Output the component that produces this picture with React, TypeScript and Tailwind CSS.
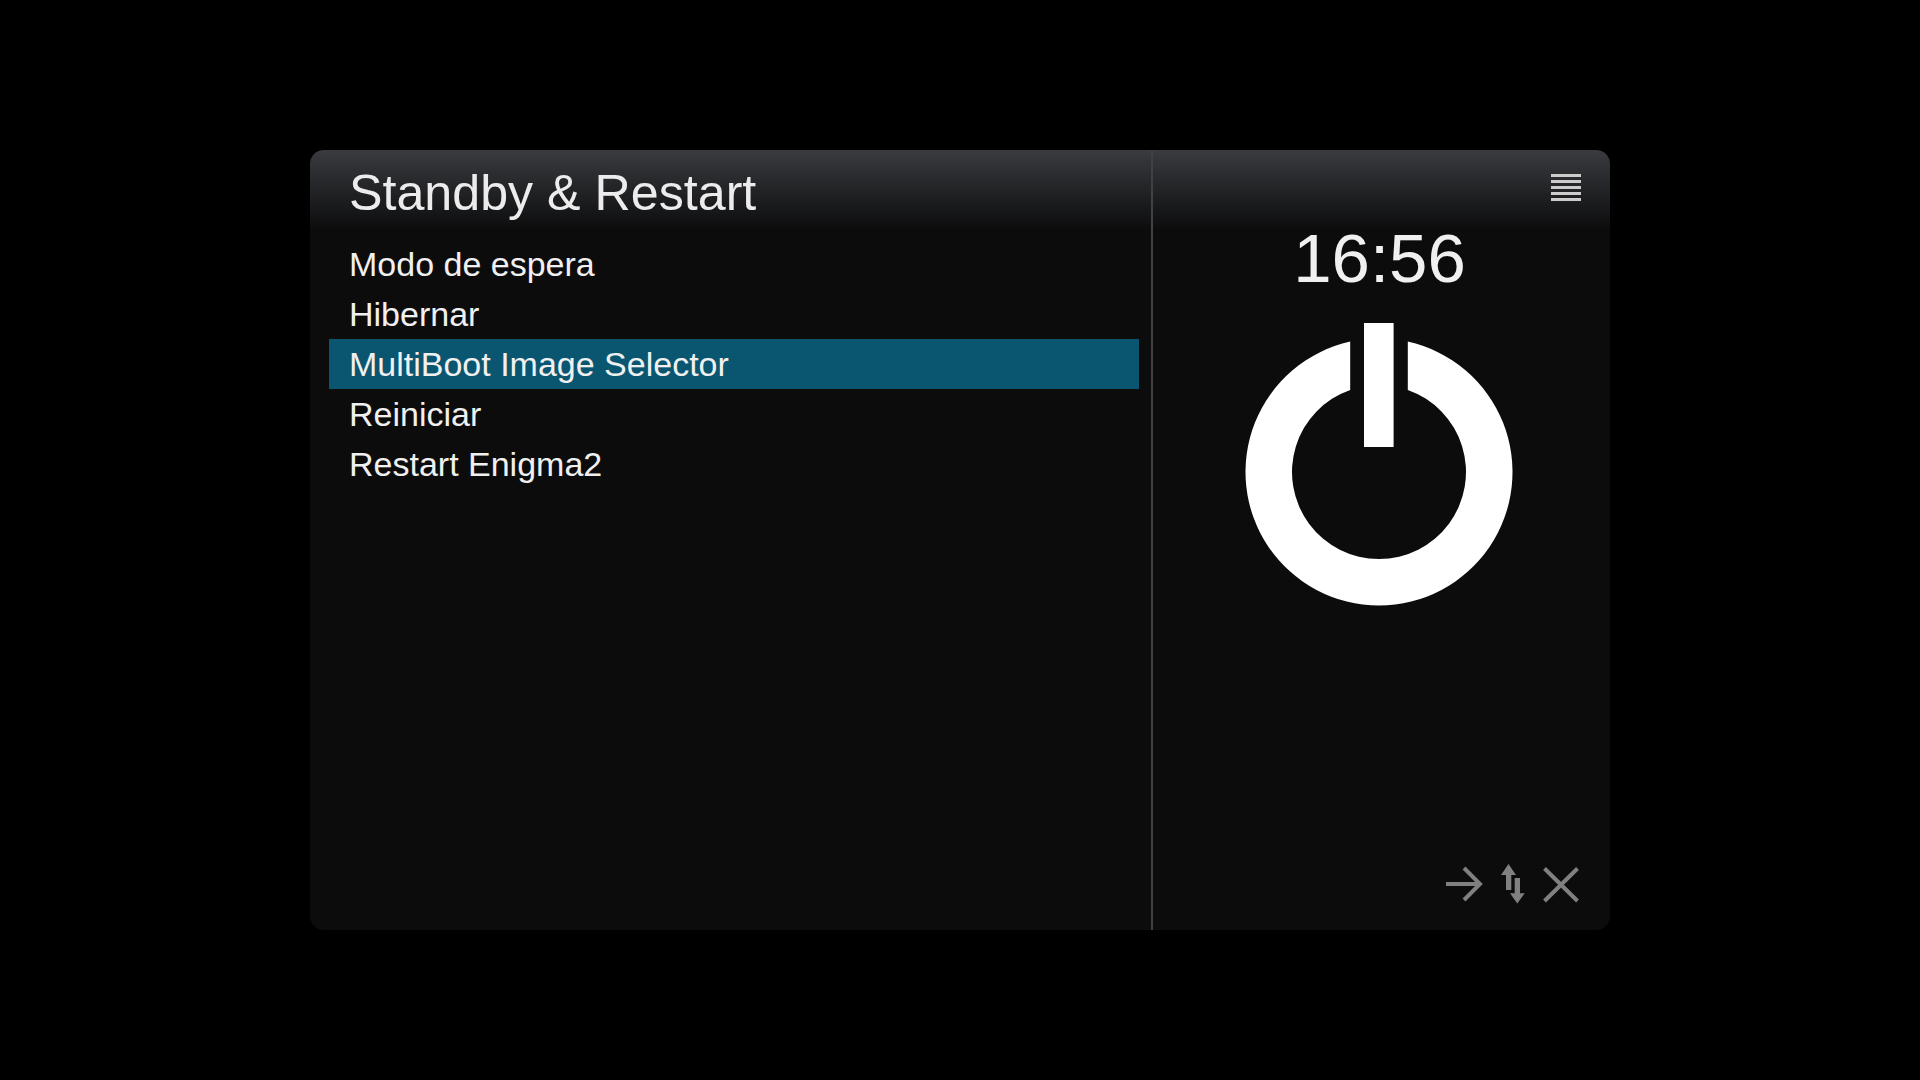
import React from "react";

const items = ["Modo de espera", "Hibernar", "MultiBoot Image Selector", "Reiniciar", "Restart Enigma2"];

function PowerIcon() {
  return (
    <svg width="270" height="285" viewBox="0 0 270 285" className="block">
      <path
        fill="#fff"
        d="M106.2 19.6A133.5 133.5 0 1 0 163.8 19.6L163.8 67.9A87 87 0 1 1 106.2 67.9Z"
      />
      <rect x="120" y="1" width="29.600" height="124" fill="#fff" />
    </svg>
  );
}

function ActionIcons() {
  return (
    <svg width="134" height="40" viewBox="0 0 134 40" className="block" fill="#808080">
      {/* arrow right */}
      <path d="M0 20H34M18 4 34 20 18 36" fill="none" stroke="#808080" strokeWidth="4" />
      {/* up and down */}
      <path d="M62.500 0 70 11H55Z" />
      <rect x="60" y="10" width="5.300" height="16" />
      <rect x="68.700" y="14" width="5.300" height="16" />
      <path d="M64 29.300H78.700L71.300 39.500Z" />
      {/* close */}
      <path d="M98.500 4.500 131.500 37M131.500 4.500 98.500 37" fill="none" stroke="#808080" strokeWidth="4" />
    </svg>
  );
}

export default function App() {
  return (
    <div
      className="flex h-screen w-full items-center justify-center bg-black"
      style={{ fontFamily: '"Liberation Sans", Arial, sans-serif' }}
    >
      <div className="flex h-[780px] w-[1300px] overflow-hidden rounded-[14px] bg-[#0c0c0d] bg-[linear-gradient(to_bottom,#393b3f,#0c0c0d)] bg-[length:100%_80px] bg-no-repeat">
        <div className="flex w-[841px] flex-col">
          <div className="h-[80px] pl-[39px] text-[50.2px] leading-[86px] text-[#ececec]">Standby &amp; Restart</div>
          <ul className="mt-[9px] pl-[19px] pr-[12px]">
            {items.map((item, i) => (
              <li
                key={item}
                className={`h-[50px] pl-[20px] text-[34px] leading-[50px] text-[#f0f0f0] ${
                  i === 2 ? "bg-[#0a5570] text-[#e8f4f8]" : ""
                }`}
              >
                {item}
              </li>
            ))}
          </ul>
        </div>
        <div className="w-[2px] bg-[#3f4144]" />
        <div className="flex flex-1 flex-col items-center pb-[26px] pr-[6px]">
          <div className="flex h-[80px] w-full justify-end pr-[23px] pt-[24px]">
            <div className="flex w-[30px] flex-col gap-[3px]">
              {[0, 1, 2, 3, 4].map((n) => (
                <div key={n} className="h-[3px] bg-[#cccccc]" />
              ))}
            </div>
          </div>
          <div className="ml-[2px] h-[60px] text-[69px] leading-[58px] text-[#f0f0f0]">16:56</div>
          <div className="mt-[32px]">
            <PowerIcon />
          </div>
          <div className="mt-auto flex w-full justify-end pr-[24px]">
            <ActionIcons />
          </div>
        </div>
      </div>
    </div>
  );
}
